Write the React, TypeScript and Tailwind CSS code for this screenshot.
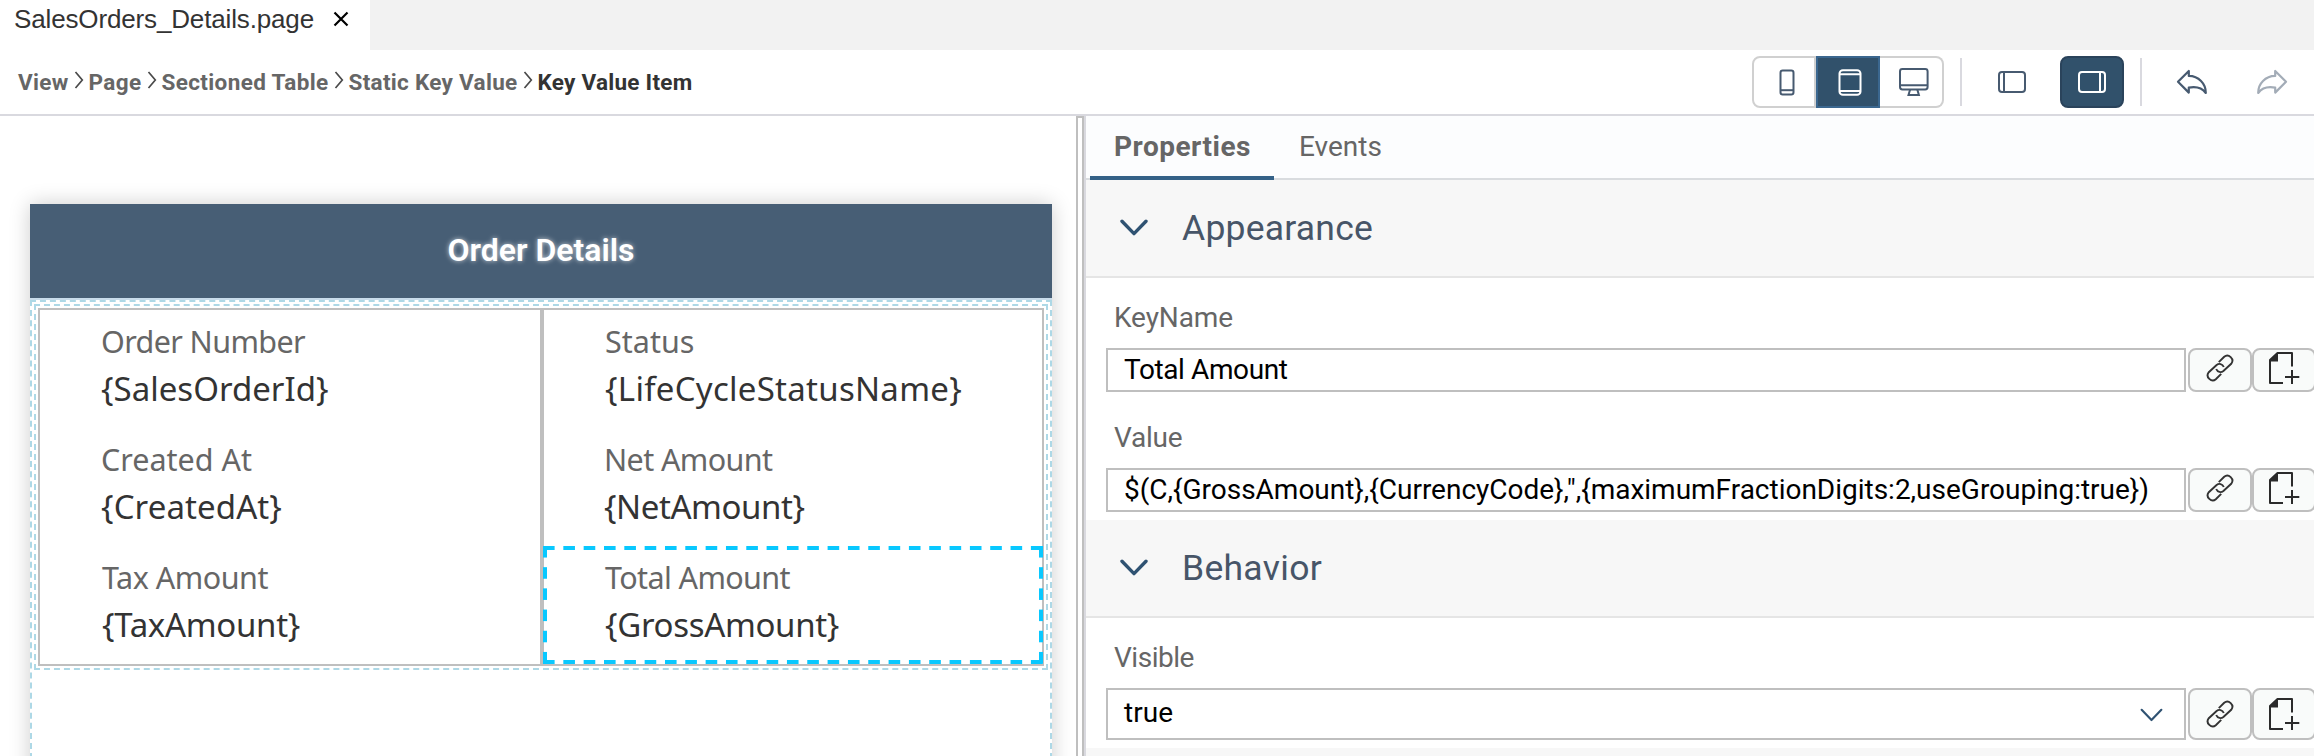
import { useLayoutEffect, useRef, useState } from "react";
import clsx from "clsx";

type LabelProps = { children: string; width: number; className?: string };

/* Single line of text whose tracking is adjusted so that it fills the given width. */
function Label({ children, width, className }: LabelProps) {
  const ref = useRef<HTMLSpanElement>(null);
  const [tracking, setTracking] = useState(0);
  useLayoutEffect(() => {
    if (!ref.current) return;
    const natural = ref.current.getBoundingClientRect().width;
    setTracking((width - natural) / children.length);
  }, [children, width]);
  return (
    <span ref={ref} className={clsx("inline-block shrink-0 whitespace-pre", className)} style={{ letterSpacing: tracking }}>
      {children}
    </span>
  );
}

function CrumbChevron() {
  return (
    <svg viewBox="0 0 10 18" className="mt-[21px] h-[18px] w-[10px] shrink-0 fill-none stroke-[#4a4a4a] stroke-[1.7]">
      <path d="M1.5 1 L8.3 9 L1.5 17" />
    </svg>
  );
}

function ChevronDown({ className }: { className: string }) {
  return (
    <svg viewBox="0 0 28 17" className={clsx("shrink-0 fill-none stroke-[#2f5272]", className)} strokeLinecap="round" strokeLinejoin="round">
      <path d="M2 2.2 L14 14.6 L26 2.2" />
    </svg>
  );
}

function PhoneIcon() {
  return (
    <svg viewBox="0 0 64 52" className="h-[52px] w-[64px] shrink-0 fill-none stroke-[#475a70] stroke-2">
      <rect x="28.5" y="14.5" width="13" height="24" rx="2.2" />
      <path d="M28.5 34.2 H41.5" />
    </svg>
  );
}

function TabletIcon() {
  return (
    <svg viewBox="0 0 64 52" className="h-[52px] w-[64px] shrink-0 fill-none stroke-white stroke-2">
      <rect x="23.5" y="14.2" width="21" height="24.6" rx="3.4" />
      <path d="M24 18.2 H44 M24 35 H44" />
    </svg>
  );
}

function DesktopIcon() {
  return (
    <svg viewBox="0 0 64 52" className="ml-[2px] h-[52px] w-[64px] shrink-0 fill-none stroke-[#475a70] stroke-2">
      <rect x="20" y="13" width="27.6" height="20.5" rx="2.4" />
      <path d="M20 29.3 H47.6 M30.1 33.5 L28.5 39 H38.9 L37.3 33.5" />
    </svg>
  );
}

function PanelIcon({ side, className }: { side: "left" | "right"; className: string }) {
  return (
    <svg viewBox="0 0 28 22" className={clsx("h-[22px] w-[28px] fill-none stroke-2", className)}>
      <rect x="1" y="1" width="26" height="20" rx="3" />
      <path d={side === "left" ? "M6 1 V21" : "M22 1 V21"} />
    </svg>
  );
}

function ArrowIcon({ className }: { className: string }) {
  return (
    <svg viewBox="0 0 32 26" className={clsx("h-[26px] w-[32px] fill-none stroke-[2.2]", className)} strokeLinejoin="round">
      <path d="M2 12.8 L12.8 2 V6.9 C22.5 7 30 14.5 29.8 24 C26 18.8 20 17.2 12.8 18.6 V23.6 Z" />
    </svg>
  );
}

function LinkIcon() {
  return (
    <svg viewBox="0 0 28 28" className="size-7 fill-none stroke-[#333] stroke-[1.9]">
      <path d="M12.8 8.2 L18.2 2.8 C22.4 -0.8 29 5 25.2 9.8 L17.4 17 C15 18.9 11.6 18.3 10.2 15" />
      <path d="M15.2 19.8 L9.8 25.2 C5.6 28.8 -1 23 2.8 18.2 L10.6 11 C13 9.1 16.4 9.7 17.8 13" />
    </svg>
  );
}

function AddDocIcon() {
  return (
    <svg viewBox="0 0 32 32" className="ml-[2px] h-8 w-8 fill-none stroke-[#2b2b2b] stroke-2">
      <path d="M14 31 H1 V8 L8.5 1 H23 V14.5" strokeLinejoin="round" />
      <path d="M0.5 8.5 L9 0.5 V9.5 H0.5 Z" className="fill-[#2b2b2b] stroke-none" />
      <path d="M16 25 H30.3 M23 18 V32" />
    </svg>
  );
}

function KeyValue({ k, kw, v, vw, indent, selected }: { k: string; kw: number; v: string; vw: number; indent: string; selected?: boolean }) {
  return (
    <div className={clsx("relative flex h-[118px] flex-col items-start pt-[11px] font-['Noto_Sans',sans-serif]", indent)}>
      <Label width={kw} className="h-[41px] text-[30.5px] leading-[41px] text-[#666]">{k}</Label>
      <Label width={vw} className="h-[53px] text-[33px] leading-[53px] text-[#333]">{v}</Label>
      {selected && (
        <div className="absolute inset-x-[-1px] inset-y-0 [background-image:linear-gradient(90deg,#08c8ff_12px,transparent_12px),linear-gradient(90deg,#08c8ff_12px,transparent_12px),linear-gradient(180deg,#08c8ff_12px,transparent_12px),linear-gradient(180deg,#08c8ff_12px,transparent_12px)] [background-position:left_top,left_bottom,left_top,right_top] [background-repeat:repeat-x,repeat-x,repeat-y,repeat-y] [background-size:20.333px_4px,20.333px_4px,4px_21.2px,4px_21.2px]" />
      )}
    </div>
  );
}

function SectionHeader({ title, width }: { title: string; width: number }) {
  return (
    <div className="flex h-[98px] shrink-0 items-start border-b-2 border-[#e5e5e5] bg-[#f7f7f7] pl-[34px]">
      <ChevronDown className="mt-[39px] h-[17px] w-[28px] stroke-[3.4]" />
      <Label width={width} className="ml-[34px] text-[35.5px] leading-[96px] text-[#475568]">{title}</Label>
    </div>
  );
}

function Field({ label, labelWidth, value, valueWidth, select }: { label: string; labelWidth: number; value: string; valueWidth: number; select?: boolean }) {
  const height = select ? "h-[52px]" : "h-[44px]";
  const iconShift = select ? "" : "pb-1";
  return (
    <div className="shrink-0">
      <div className="flex h-[70px] items-start pl-[28px]">
        <Label width={labelWidth} className="text-[28px] leading-[80px] text-[#666]">{label}</Label>
      </div>
      <div className="flex pl-[20px]">
        <div className={clsx("mr-[2px] flex w-[1080px] shrink-0 items-center justify-between border-2 border-[#bfbfbf] bg-white pl-[16px] pr-[21px]", height)}>
          <Label width={valueWidth} className={clsx("text-[28px] text-black", select ? "-mt-[3px] leading-[48px]" : "leading-[40px]")}>{value}</Label>
          {select && <ChevronDown className="mt-[2px] h-[14px] w-[23px] stroke-[2.6]" />}
        </div>
        <div className={clsx("flex w-[64px] shrink-0 items-center justify-center rounded-lg border-2 border-[#bfbfbf] bg-[#f9fbfa]", height, iconShift)}>
          <LinkIcon />
        </div>
        <div className={clsx("flex w-[64px] shrink-0 items-center justify-center rounded-lg border-2 border-[#bfbfbf] bg-[#f9fbfa]", height, iconShift)}>
          <AddDocIcon />
        </div>
      </div>
    </div>
  );
}

const crumbs = [
  { text: "View", width: 50.5 },
  { text: "Page", width: 53 },
  { text: "Sectioned Table", width: 167 },
  { text: "Static Key Value", width: 169 },
];

export default function App() {
  return (
    <div className="flex h-[756px] w-[2314px] flex-col overflow-hidden bg-white font-['Roboto','Noto_Sans',sans-serif]">
      <div className="flex h-[50px] shrink-0 bg-[#f2f2f2]">
        <div className="flex h-full w-[370px] items-start bg-white pl-[14px]">
          <Label width={300} className="font-['Liberation_Sans',Arial,sans-serif] text-[26px] leading-[38px] text-[#333]">
            SalesOrders_Details.page
          </Label>
          <svg viewBox="0 0 16 16" className="ml-[19px] mt-[11px] size-4 shrink-0 fill-none stroke-black stroke-[2.2]">
            <path d="M1.5 1.5 L14.5 14.5 M14.5 1.5 L1.5 14.5" />
          </svg>
        </div>
      </div>

      <header className="flex h-[66px] shrink-0 items-start border-b-2 border-[#d9d9df]">
        <nav className="flex items-start pl-[18px] text-[22.5px] font-bold leading-[65px] text-[#666]">
          {crumbs.map((c) => (
            <div key={c.text} className="flex items-start gap-[5px] pr-[5px]">
              <Label width={c.width}>{c.text}</Label>
              <CrumbChevron />
            </div>
          ))}
          <Label width={155} className="text-[#333]">Key Value Item</Label>
        </nav>
        <div className="ml-auto flex items-center pt-[6px]">
          <div className="flex h-[52px] w-[192px]">
            <div className="flex w-[64px] items-center justify-center rounded-l-lg border-2 border-[#d0d0d0]">
              <PhoneIcon />
            </div>
            <div className="flex w-[64px] items-center justify-center border-2 border-[#3b678f] bg-[#31516b]">
              <TabletIcon />
            </div>
            <div className="flex w-[64px] items-center justify-center rounded-r-lg border-2 border-l-0 border-[#d0d0d0]">
              <DesktopIcon />
            </div>
          </div>
          <div className="ml-4 h-12 w-[2px] bg-[#d9d9df]" />
          <div className="ml-[36px] flex items-center">
            <PanelIcon side="left" className="stroke-[#475a70]" />
          </div>
          <div className="ml-[34px] flex h-[52px] w-[64px] items-center justify-center rounded-lg border-2 border-[#2a435b] bg-[#31516b]">
            <PanelIcon side="right" className="stroke-white" />
          </div>
          <div className="ml-4 h-12 w-[2px] bg-[#d9d9df]" />
          <ArrowIcon className="ml-[34px] stroke-[#475a70]" />
          <ArrowIcon className="ml-[48px] mr-[26px] -scale-x-100 stroke-[#a3acb7]" />
        </div>
      </header>

      <div className="flex min-h-0 flex-1">
        <main className="w-[1076px] shrink-0 overflow-hidden pl-[30px] pt-[88px]">
          <section className="h-[700px] w-[1022px] bg-white shadow-[0_0_20px_rgba(0,0,0,0.2)]">
            <div className="flex h-[96px] justify-center border-b-2 border-[#c9dceb] bg-[#475e75]">
              <Label width={187} className="text-[32px] font-semibold leading-[93px] text-white [text-shadow:0_0_5px_rgba(255,255,255,0.7)]">
                Order Details
              </Label>
            </div>
            <div className="h-[600px] border-2 border-dashed border-[#add8e6] p-[2px]">
              <div className="border-2 border-dashed border-[#add8e6] p-[2px]">
                <div className="flex h-[358px] border-2 border-[#bfbfbf]">
                  <div className="w-[504px] shrink-0 border-r-4 border-[#bfbfbf]">
                    <KeyValue indent="pl-[61px]" k="Order Number" kw={204} v="{SalesOrderId}" vw={227.5} />
                    <KeyValue indent="pl-[61px]" k="Created At" kw={151} v="{CreatedAt}" vw={181} />
                    <KeyValue indent="pl-[62px]" k="Tax Amount" kw={166} v="{TaxAmount}" vw={198} />
                  </div>
                  <div className="flex-1">
                    <KeyValue indent="pl-[61px]" k="Status" kw={89.5} v="{LifeCycleStatusName}" vw={357} />
                    <KeyValue indent="pl-[60px]" k="Net Amount" kw={168.5} v="{NetAmount}" vw={200.5} />
                    <KeyValue indent="pl-[61px]" k="Total Amount" kw={185} v="{GrossAmount}" vw={234} selected />
                  </div>
                </div>
              </div>
            </div>
          </section>
        </main>

        <div className="w-[8px] shrink-0 border-2 border-b-0 border-[#bfbfbf]" />

        <aside className="flex min-w-0 flex-1 flex-col overflow-hidden border-l-2 border-[#d9d9df]">
          <div className="flex h-[64px] shrink-0 items-stretch bg-[#fcfdfe] pl-[4px] shadow-[inset_0_-2px_0_#d9dcdf]">
            <div className="w-[184px] border-b-4 border-[#346187] pl-[24px]">
              <Label width={137} className="text-[28px] font-bold leading-[61px] text-[#666]">Properties</Label>
            </div>
            <div className="pl-[25px]">
              <Label width={83} className="text-[28px] leading-[61px] text-[#666]">Events</Label>
            </div>
          </div>
          <SectionHeader title="Appearance" width={191} />
          <Field label="KeyName" labelWidth={119} value="Total Amount" valueWidth={163.5} />
          <div className="h-[6px] shrink-0" />
          <Field label="Value" labelWidth={68.5} value={'$(C,{GrossAmount},{CurrencyCode},",{maximumFractionDigits:2,useGrouping:true})'} valueWidth={1025} />
          <div className="h-[8px] shrink-0" />
          <SectionHeader title="Behavior" width={140} />
          <Field label="Visible" labelWidth={80} value="true" valueWidth={49} select />
          <div className="h-[8px] shrink-0" />
          <div className="flex-1 bg-[#f7f7f7]" />
        </aside>
      </div>
    </div>
  );
}
